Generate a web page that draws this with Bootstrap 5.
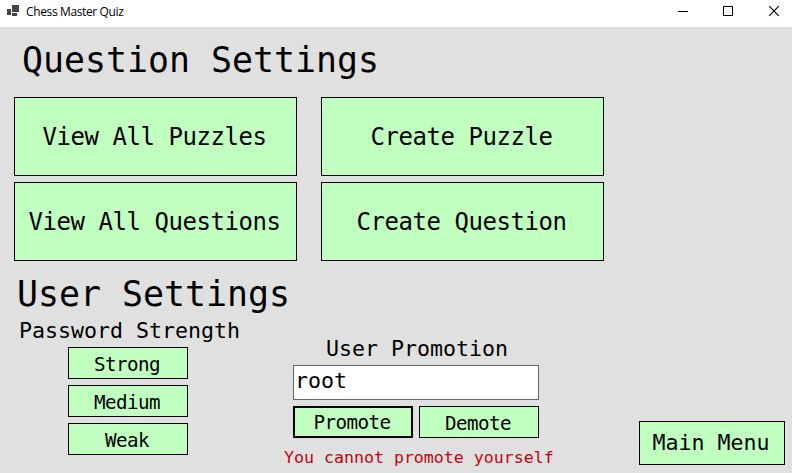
<!DOCTYPE html>
<html lang="en">
<head>
<meta charset="utf-8">
<meta name="viewport" content="width=device-width, initial-scale=1">
<title>Chess Master Quiz</title>
<link href="https://cdn.jsdelivr.net/npm/bootstrap@5.3.0/dist/css/bootstrap.min.css" rel="stylesheet">
<style>
  body { height: 473px; background: #e0e0e0; color: #000; font-family: "DejaVu Sans Mono", monospace; overflow: hidden; white-space: nowrap; }
  .titlebar { height: 27px; padding-left: 7px; font: 12px/24px "Open Sans", sans-serif; }
  .titlebar .caption { letter-spacing: -.37px; margin-left: 7px; }
  .titlebar .window-button { width: 46px; height: 24px; }
  .page-heading { font-size: 34.88px; line-height: 40px; font-weight: 400; margin: 0; }
  .question-heading { padding: 13px 0 17px 22px; }
  .user-heading { padding: 13px 0 3px 17px; }
  .question-grid { margin-left: 14px; gap: 6px 24px; grid-template-columns: 283px 283px; grid-auto-rows: 79px; }
  .btn-quiz { --bs-btn-color: #000; --bs-btn-bg: #c0ffc0; --bs-btn-border-color: #000; --bs-btn-border-radius: 0;
    --bs-btn-hover-bg: #acf3ac; --bs-btn-hover-color: #000; --bs-btn-hover-border-color: #000;
    --bs-btn-padding-x: 0; --bs-btn-padding-y: 0; font-family: inherit; font-size: 24px; letter-spacing: -.45px; line-height: 1; padding-right: 2px; }
  .btn-small { width: 120px; height: 32px; font-size: 19.2px; letter-spacing: -.56px; padding-top: 3px; }
  .btn-focused { border-width: 2px; padding-top: 1px; }
  .group-label { font-size: 21.6px; line-height: 27px; margin-bottom: 3px; }
  .password-group { width: 240px; padding-left: 19px; }
  .button-stack { gap: 6px; }
  .strength-buttons { margin-left: 49px; }
  .promotion-group { width: 272px; margin: 18px 0 0 43px; }
  .promotion-label { padding-left: 2px; }
  .user-name { width: 246px; height: 35px; border: 1px solid #646464; border-radius: 0; padding: 0 1px 4px; color: #000; font-size: 21.6px; line-height: 30px; }
  .promotion-fields { margin-left: 10px; width: 246px; }
  .error-text { color: #c8000f; font-size: 16.6px; line-height: 22px; margin-top: 9px; padding-left: 1px; }
  .btn-menu { width: 146px; height: 44px; font-size: 21.6px; letter-spacing: 0; margin: 104px 7px 0 auto; }
</style>
</head>
<body>
<header class="titlebar bg-white d-flex align-items-start">
  <svg width="12" height="24" viewBox="0 0 12 24" shape-rendering="crispEdges" fill="#444"><path d="M0 9h4v6H0zM5 5h7v7H5zM5 13h5v3H5z"/></svg>
  <span class="caption">Chess Master Quiz</span>
  <div class="d-flex ms-auto">
    <svg class="window-button" viewBox="0 0 46 24" shape-rendering="crispEdges" aria-label="Minimize"><path d="M24 11h10v1H24z"/></svg>
    <svg class="window-button" viewBox="0 0 46 24" shape-rendering="crispEdges" aria-label="Maximize"><path d="M23.5 6.5h9v9h-9z" fill="none" stroke="#000"/></svg>
    <svg class="window-button" viewBox="0 0 46 24" aria-label="Close"><path d="M23.2 6.2l9.6 9.6M32.8 6.2l-9.6 9.6" fill="none" stroke="#000" stroke-width="1.1"/></svg>
  </div>
</header>
<main>
  <h1 class="page-heading question-heading">Question Settings</h1>
  <div class="question-grid d-grid">
    <button class="btn btn-quiz">View All Puzzles</button>
    <button class="btn btn-quiz">Create Puzzle</button>
    <button class="btn btn-quiz">View All Questions</button>
    <button class="btn btn-quiz">Create Question</button>
  </div>
  <h2 class="page-heading user-heading">User Settings</h2>
  <div class="d-flex align-items-start">
    <section class="password-group flex-shrink-0">
      <div class="group-label">Password Strength</div>
      <div class="button-stack strength-buttons d-flex flex-column align-items-start">
        <button class="btn btn-quiz btn-small">Strong</button>
        <button class="btn btn-quiz btn-small">Medium</button>
        <button class="btn btn-quiz btn-small">Weak</button>
      </div>
    </section>
    <section class="promotion-group flex-shrink-0">
      <div class="promotion-fields">
        <div class="group-label promotion-label text-center">User Promotion</div>
        <div class="button-stack d-flex flex-column">
          <input class="user-name form-control" type="text" value="root" aria-label="User name">
          <div class="d-flex justify-content-between">
            <button class="btn btn-quiz btn-small btn-focused">Promote</button>
            <button class="btn btn-quiz btn-small">Demote</button>
          </div>
        </div>
      </div>
      <div class="error-text">You cannot promote yourself</div>
    </section>
    <button class="btn btn-quiz btn-menu">Main Menu</button>
  </div>
</main>
<script src="https://cdn.jsdelivr.net/npm/bootstrap@5.3.0/dist/js/bootstrap.bundle.min.js"></script>
</body>
</html>
